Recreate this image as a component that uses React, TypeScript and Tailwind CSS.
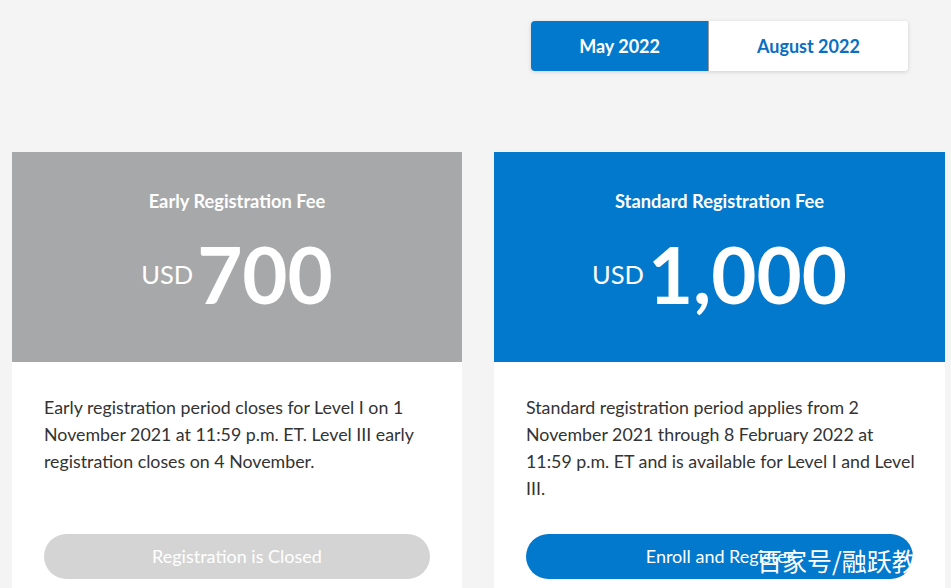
import React from "react";

export default function App() {
  return (
    <div
      className="relative h-[588px] w-[951px] overflow-hidden bg-[#f4f4f4]"
      style={{ fontFamily: "Lato, 'Noto Sans', sans-serif" }}
    >
      <div className="grid grid-cols-[450px_451px] gap-x-8 pl-3 pt-[21px]">
        <div />
        <div className="flex justify-center">
          <div className="flex h-[50px] overflow-hidden rounded-[4px] bg-white shadow-[0_1px_4px_rgba(0,0,0,0.15)]">
            <button className="flex items-center bg-[#0279cd] px-12 text-[18px] font-bold text-white">
              May 2022
            </button>
            <div className="w-px bg-[#9a9a9a]" />
            <button className="flex items-center bg-white px-12 text-[18px] font-bold text-[#0a6fc0]">
              August 2022
            </button>
          </div>
        </div>

        <Card
          headerBg="bg-[#a7a8a9]"
          title="Early Registration Fee"
          amount="700"
          text="Early registration period closes for Level I on 1 November 2021 at 11:59 p.m. ET. Level III early registration closes on 4 November."
          button={
            <div className="flex h-[45px] items-center justify-center rounded-full bg-[#d4d4d4] text-[18px] text-white">
              Registration is Closed
            </div>
          }
        />
        <Card
          headerBg="bg-[#0279cd]"
          title="Standard Registration Fee"
          amount="1,000"
          text="Standard registration period applies from 2 November 2021 through 8 February 2022 at 11:59 p.m. ET and is available for Level I and Level III."
          button={
            <div className="flex h-[45px] items-center justify-center rounded-full bg-[#0279cd] text-[18px] text-white">
              Enroll and Register
            </div>
          }
        />
      </div>

      <div
        className="absolute left-[757px] top-[544px] text-[25px] leading-[32px] text-white"
        style={{ fontFamily: "'Noto Sans CJK SC', sans-serif" }}
      >
        百家号/融跃教
      </div>
    </div>
  );
}

function Card({
  headerBg,
  title,
  amount,
  text,
  button,
}: {
  headerBg: string;
  title: string;
  amount: string;
  text: string;
  button: React.ReactNode;
}) {
  return (
    <div className="mt-[81px] flex flex-col bg-white">
      <div className={`flex h-[210px] flex-col items-center pt-[38px] text-white ${headerBg}`}>
        <div className="text-[18.3px] font-bold leading-[22px]">{title}</div>
        <div className="mt-[23px] flex items-start">
          <span className="mt-[27px] text-[25.5px] leading-none">USD</span>
          <span className="ml-[4px] text-[78px] font-bold leading-none">{amount}</span>
        </div>
      </div>
      <div className="flex flex-1 flex-col px-8 pb-8 pt-8">
        <p className="mb-8 mr-[-8px] text-[17.8px] leading-[27px] text-[#333333]">{text}</p>
        <div className="mt-auto">{button}</div>
      </div>
    </div>
  );
}
